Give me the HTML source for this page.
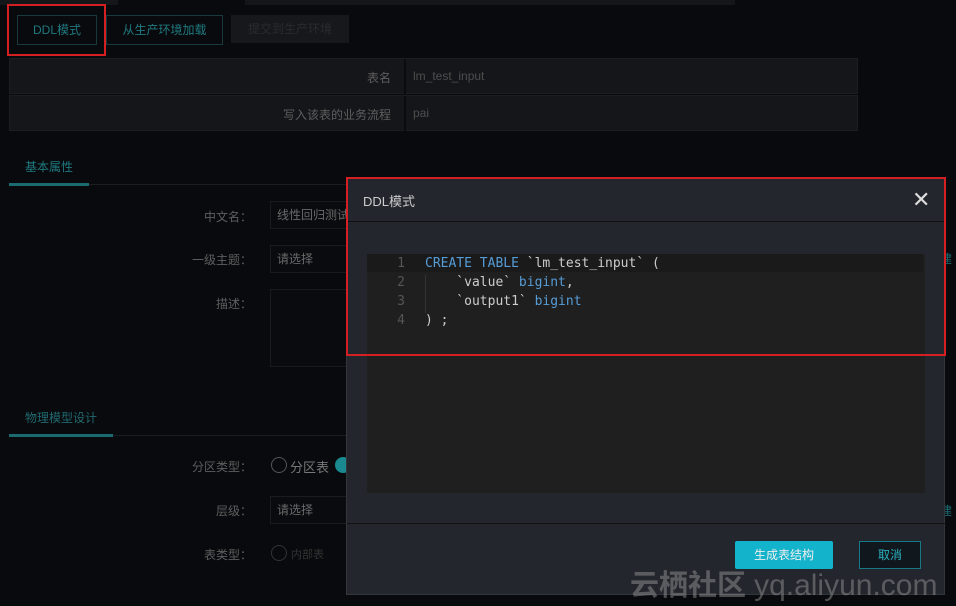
<!DOCTYPE html><html><head><meta charset="utf-8"><style>
*{margin:0;padding:0;box-sizing:border-box}
body{width:956px;height:606px;background:#090a0d;font-family:"Liberation Sans","Noto Sans CJK SC",sans-serif;font-size:12px;color:#777;position:relative;overflow:hidden}
.a{position:absolute}
.btn{position:absolute;border:1px solid #173a3c;color:#1f7a80;text-align:center;line-height:28px;font-size:12px}
.row{position:absolute;left:9px;width:849px;height:36px;background:#151619;border:1px solid #1c1d20}
.row .l{position:absolute;right:466px;top:10px;color:#5e5e5e}
.row .v{position:absolute;left:403px;top:10px;color:#4e4e4e}
.row .sep{position:absolute;left:394px;top:0;width:2px;height:36px;background:#0b0c0e}
.lab{position:absolute;color:#5e5e5e;text-align:right;width:100px}
.inp{position:absolute;left:270px;border:1px solid #1a1b1e;background:#0a0b0e;color:#6a6a6a;padding-left:6px}
.mono{font-family:"DejaVu Sans Mono","Liberation Mono",monospace;font-size:13px}
</style></head><body>
<div class="a" style="left:0;top:0;width:118px;height:5px;background:#15161a"></div>
<div class="a" style="left:245px;top:0;width:490px;height:5px;background:#15161a"></div>
<div class="btn" style="left:17px;top:15px;width:80px">DDL模式</div>
<div class="btn" style="left:106px;top:15px;width:117px">从生产环境加载</div>
<div class="a" style="left:231px;top:15px;width:118px;height:28px;background:#17181b;color:#2a2b2e;line-height:28px;text-align:center">提交到生产环境</div>
<div class="a" style="left:7px;top:4px;width:99px;height:52px;border:2px solid #d41f23"></div>
<div class="row" style="top:58px"><span class="l">表名</span><div class="sep"></div><span class="v">lm_test_input</span></div>
<div class="row" style="top:95px"><span class="l">写入该表的业务流程</span><div class="sep"></div><span class="v">pai</span></div>
<div class="a" style="left:25px;top:158px;color:#1f7a80;font-size:12px">基本属性</div>
<div class="a" style="left:9px;top:184px;width:340px;height:1px;background:#1c1d20"></div>
<div class="a" style="left:9px;top:183px;width:80px;height:3px;background:#1a6a70"></div>
<div class="lab" style="left:152px;top:208px">中文名：</div>
<div class="inp" style="top:201px;width:80px;height:28px;line-height:26px">线性回归测试</div>
<div class="lab" style="left:152px;top:251px">一级主题：</div>
<div class="inp" style="top:245px;width:80px;height:28px;line-height:26px">请选择</div>
<div class="lab" style="left:152px;top:295px">描述：</div>
<div class="inp" style="top:289px;width:80px;height:78px"></div>
<div class="a" style="left:25px;top:409px;color:#1f6a70">物理模型设计</div>
<div class="a" style="left:9px;top:435px;width:340px;height:1px;background:#1c1d20"></div>
<div class="a" style="left:9px;top:434px;width:104px;height:3px;background:#1a6a70"></div>
<div class="lab" style="left:152px;top:458px">分区类型：</div>
<div class="a" style="left:271px;top:457px;width:16px;height:16px;border:1px solid #555;border-radius:50%"></div>
<div class="a" style="left:290px;top:457px;color:#777;font-size:13px">分区表</div>
<div class="a" style="left:335px;top:457px;width:16px;height:16px;background:#1a8a90;border-radius:50%"></div>
<div class="lab" style="left:152px;top:502px">层级：</div>
<div class="inp" style="top:496px;width:80px;height:28px;line-height:26px">请选择</div>
<div class="lab" style="left:152px;top:546px">表类型：</div>
<div class="a" style="left:271px;top:545px;width:16px;height:16px;border:1px solid #333;border-radius:50%"></div>
<div class="a" style="left:291px;top:546px;color:#333;font-size:11px">内部表</div>
<div class="a" style="left:940px;top:250px;color:#1a6a70">建</div>
<div class="a" style="left:940px;top:502px;color:#1a6a70">建</div>
<div class="a" style="left:346px;top:178px;width:599px;height:417px;background:#23262d;border:1px solid #33363d">
 <div class="a" style="left:16px;top:12px;color:#ccc;font-size:13px">DDL模式</div>
 <div class="a" style="left:565px;top:8px;color:#ddd;font-size:22px">✕</div>
 <div class="a" style="left:0;top:42px;width:599px;height:1px;background:#111"></div>
 <div class="a" style="left:20px;top:75px;width:558px;height:239px;background:#1f1f1f"></div>
 <div class="a mono" style="left:20px;top:75px;width:556px;height:18px;background:#1a1a1a"></div>
 <div class="a mono" style="left:20px;top:75px;width:38px;line-height:19px;text-align:right;color:#555">1<br>2<br>3<br>4</div>
 <div class="a" style="left:78px;top:96px;width:1px;height:38px;background:#333"></div>
 <div class="a mono" style="left:78px;top:75px;line-height:19px;color:#ccc;white-space:pre"><span style="color:#569cd6">CREATE TABLE</span> `lm_test_input` (
    `value` <span style="color:#569cd6">bigint</span>,
    `output1` <span style="color:#569cd6">bigint</span>
) ;</div>
 <div class="a" style="left:0;top:344px;width:599px;height:1px;background:#111"></div>
 <div class="a" style="left:388px;top:362px;width:98px;height:28px;background:#14b3cc;color:#eee;line-height:28px;text-align:center;border-radius:2px">生成表结构</div>
 <div class="a" style="left:512px;top:362px;width:62px;height:28px;border:1px solid #157a85;background:#11181d;color:#2ab0c0;line-height:26px;text-align:center">取消</div>
</div>
<div class="a" style="left:346px;top:177px;width:600px;height:179px;border:2px solid #d41f23"></div>
<div class="a" style="left:630px;top:562px;color:rgba(160,160,160,0.45);font-size:29px;font-weight:bold;white-space:nowrap">云栖社区 <span style="font-weight:normal;font-size:30px">yq.aliyun.com</span></div>
</body></html>
